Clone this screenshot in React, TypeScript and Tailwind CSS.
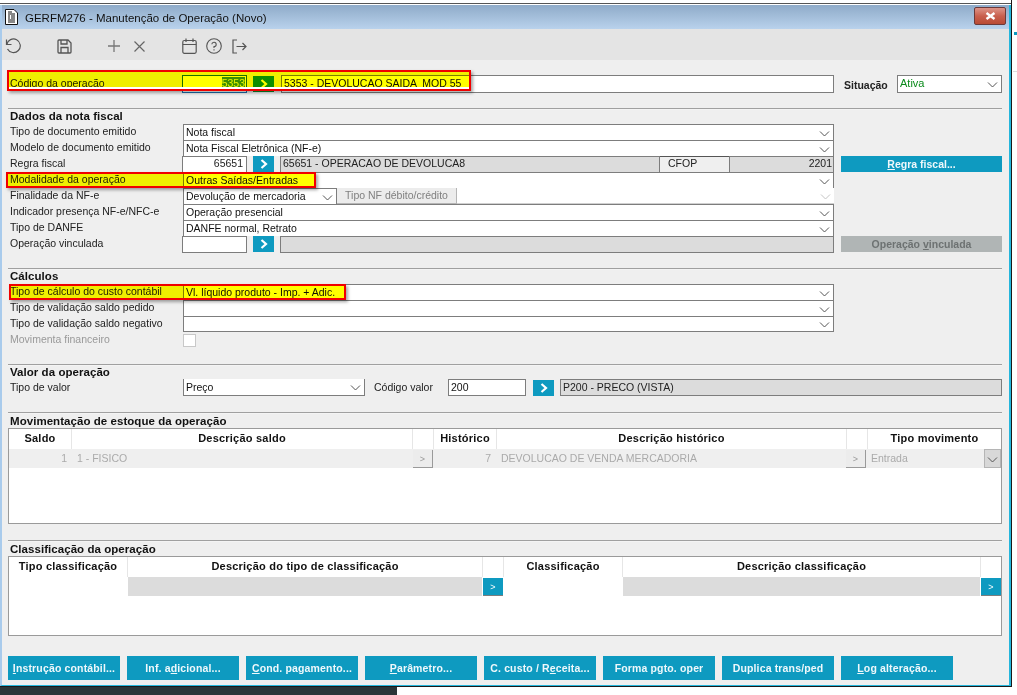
import React from "react";

const FONT = "font-['Liberation_Sans',Arial,sans-serif]";

function Chevron({ className = "text-[#555]" }: { className?: string }) {
  return (
    <svg width="11" height="6" viewBox="0 0 11 6" className={`mt-[2px] shrink-0 ${className}`} fill="none" stroke="currentColor" strokeWidth="1">
      <path d="M1 0.5 L5.5 5 L10 0.5" />
    </svg>
  );
}

function Arrow() {
  return (
    <svg width="8" height="10" viewBox="0 0 8 10" fill="none" stroke="white" strokeWidth="2.2">
      <path d="M1.5 1 L6 5 L1.5 9" />
    </svg>
  );
}

function GoBtn({ green = false }: { green?: boolean }) {
  return (
    <div className={`w-[21px] h-[16px] shrink-0 flex items-center justify-center ${green ? "bg-[#0d8f2b]" : "bg-[#0e9ac0]"}`}>
      <Arrow />
    </div>
  );
}

function Select({ text, className = "", color = "text-[#111]" }: { text?: string; className?: string; color?: string }) {
  return (
    <div className={`h-[16px] bg-white border-l-[1px] border-t-[1px] border-[#7d7d7d] flex items-center justify-between pl-[2px] pr-[3px] ${className}`}>
      <span className={`whitespace-nowrap pb-[2px] ${color}`}>{text}</span>
      <Chevron />
    </div>
  );
}

function Row({ label, children, muted = false }: { label: string; children: React.ReactNode; muted?: boolean }) {
  return (
    <div className="flex h-[16px] items-center">
      <span className={`w-[175px] pl-[2px] pb-[2px] shrink-0 whitespace-nowrap ${muted ? "text-[#999]" : "text-[#222]"}`}>{label}</span>
      {children}
    </div>
  );
}

function Divider() {
  return <div className="h-[2px] border-t-[1px] border-[#a0a0a0] bg-[#f4f4f4]" />;
}

function Title({ children }: { children: React.ReactNode }) {
  return <div className="font-bold text-[11.5px] text-[#111] leading-[14px] pl-[2px] tracking-[0.05px]">{children}</div>;
}

function TableHead({ label, w }: { label?: string; w?: string }) {
  return (
    <div className={`h-[20px] shrink-0 flex items-center justify-center font-bold text-[11px] tracking-[0.22px] pb-[3px] text-[#111] border-r-[1px] border-[#e6e6e6] ${w ?? ""}`}>
      {label}
    </div>
  );
}

function MiniBtn({ active = false }: { active?: boolean }) {
  return (
    <div className={`w-[20px] h-[18px] mt-[1px] shrink-0 flex items-center justify-center text-[9px] ${active ? "bg-[#0e9ac0] text-white border-b-[1px] border-[#7d7d7d]" : "bg-[#ececec] text-[#999] border-b-[1px] border-r-[1px] border-[#9a9a9a]"}`}>
      &gt;
    </div>
  );
}

function U({ children }: { children: React.ReactNode }) {
  return <span className="underline">{children}</span>;
}

function BigBtn({ children }: { children: React.ReactNode }) {
  return (
    <div className="w-[112px] h-[24px] bg-[#0e9ac0] text-[#eef8fb] font-bold text-[10.5px] flex items-center justify-center whitespace-nowrap tracking-[0.15px]">
      <span>{children}</span>
    </div>
  );
}

function Mark({ className, strip = false }: { className: string; strip?: boolean }) {
  return (
    <div className={`absolute border-[2px] border-[#f00000] shadow-[2px_2px_3px_rgba(0,0,0,0.35)] flex flex-col ${className}`}>
      <div className="flex-1 bg-[#ffff00] mix-blend-multiply" />
      {strip && <div className="h-[2px] bg-white" />}
    </div>
  );
}

export default function App() {
  return (
    <div className={`relative w-[1017px] h-[695px] bg-white overflow-hidden text-[10.5px] leading-[14px] ${FONT}`}>
      <div className="w-[1012px] h-[687px] flex flex-col pt-[3px] border-r-[1px] border-b-[1px] border-[#1a1a1a] bg-white">
        <div className="border-t-[1px] border-[#555] h-[2px]" />
        <div className="flex-1 flex flex-col border-l-[2px] border-r-[2px] border-b-[1px] border-l-[#a9cbec] border-r-[#25b6dc] border-b-[#25b6dc] min-h-0">
          {/* title bar */}
          <div className="h-[24px] shrink-0 flex items-center bg-gradient-to-b from-[#8fabc9] to-[#b9d2ec] pl-[3px] pr-[3px]">
            <svg width="13" height="16" viewBox="0 0 13 16" className="mr-[7px] shrink-0">
              <path d="M0.5 0.5 H9 L12.5 4 V15.5 H0.5 Z" fill="white" stroke="#111" />
              <path d="M3 3h4M3 5h7M3 7h2M6 7h4M3 9h2M6 9h4M3 11h7M3 13h7" stroke="#111" />
            </svg>
            <span className="text-[11.5px] leading-[14px] pt-[2px] text-[#111] whitespace-nowrap">GERFM276 - Manutenção de Operação (Novo)</span>
            <div className="ml-auto w-[32px] h-[18px] -mt-[3px] rounded-[2px] border-[1px] border-[#6b3a3a] bg-gradient-to-b from-[#dd9488] via-[#c9604e] to-[#b84a34] flex items-center justify-center">
              <svg width="11" height="8" viewBox="0 0 11 8" fill="none" stroke="white" strokeWidth="2.4">
                <path d="M1.5 1 L9.5 7 M9.5 1 L1.5 7" />
              </svg>
            </div>
          </div>
          {/* toolbar */}
          <div className="h-[31px] shrink-0 bg-[#e4e4e4] flex items-center text-[#555] pl-[3px] pt-[3px]">
            <svg width="17" height="16" viewBox="0 0 17 16" fill="none" stroke="currentColor" strokeWidth="1.2" className="shrink-0">
              <path d="M1.5 1.5 V6.5 H6.5" />
              <path d="M1.8 6.5 A6.8 6.8 0 1 1 2.5 11" />
            </svg>
            <svg width="15" height="15" viewBox="0 0 15 15" fill="none" stroke="currentColor" strokeWidth="1.3" className="ml-[35px] shrink-0">
              <path d="M1 2 a1 1 0 0 1 1-1 H11 L14 4 V13 a1 1 0 0 1-1 1 H2 a1 1 0 0 1-1-1 Z" />
              <path d="M4 1 V5 H10 V1 M4 14 V8.5 H11 V14" />
            </svg>
            <svg width="12" height="12" viewBox="0 0 12 12" fill="none" stroke="#777" strokeWidth="1.3" className="ml-[36px] shrink-0">
              <path d="M6 0 V12 M0 6 H12" />
            </svg>
            <svg width="11" height="11" viewBox="0 0 11 11" fill="none" stroke="#666" strokeWidth="1.2" className="ml-[14px] shrink-0">
              <path d="M0.5 0.5 L10.5 10.5 M10.5 0.5 L0.5 10.5" />
            </svg>
            <svg width="15" height="16" viewBox="0 0 15 16" fill="none" stroke="currentColor" strokeWidth="1.2" className="ml-[37px] shrink-0">
              <rect x="0.8" y="2.5" width="13.4" height="12.8" rx="1.5" />
              <path d="M0.8 6.5 H14.2 M4 0.5 V4 M11 0.5 V4" />
            </svg>
            <svg width="16" height="16" viewBox="0 0 16 16" fill="none" stroke="currentColor" strokeWidth="1.1" className="ml-[9px] shrink-0">
              <circle cx="8" cy="8" r="7.3" />
              <path d="M5.8 6.2 A2.2 2.2 0 1 1 8 8.6 V10" />
              <path d="M8 11.3 V12.6" />
            </svg>
            <svg width="15" height="15" viewBox="0 0 15 15" fill="none" stroke="currentColor" strokeWidth="1.2" className="ml-[10px] shrink-0">
              <path d="M5 1 H1 V14 H5" />
              <path d="M4.5 7.5 H14 M10.5 4 L14 7.5 L10.5 11" />
            </svg>
          </div>
          {/* form */}
          <div className="flex-1 bg-[#efefef] pl-[6px] pr-[7px] min-h-0 flex flex-col">
            <div className="flex items-center h-[18px] mt-[15px] text-[#222]">
              <span className="w-[174px] pl-[2px] pb-[3px] shrink-0 whitespace-nowrap">Código da operação</span>
              <div className="w-[65px] h-[18px] border-[1px] border-[#1d6fae] bg-white flex items-center justify-end pr-[1px] pb-[2px] shrink-0">
                <span className="bg-[#3d8fd0] text-[#e8f4ff] leading-[13px]">5353</span>
              </div>
              <div className="ml-[6px]"><GoBtn green /></div>
              <div className="ml-[7px] flex-1 h-[18px] bg-white border-[1px] border-[#7d7d7d] flex items-center pl-[2px] pb-[3px] whitespace-pre text-[#111]">5353 - DEVOLUCAO SAIDA  MOD 55</div>
              <span className="ml-[10px] font-bold text-[#222] whitespace-nowrap w-[53px] shrink-0 pt-[2px]">Situação</span>
              <div className="w-[105px] h-[18px] bg-white border-[1px] border-[#7d7d7d] flex items-center justify-between pl-[2px] pr-[3px] shrink-0">
                <span className="text-[#0a8a1a] text-[11px] -mt-[2px]">Ativa</span>
                <Chevron />
              </div>
            </div>

            <div className="mt-[15px]"><Divider /></div>
            <div className="-mt-[1px]"><Title>Dados da nota fiscal</Title></div>
            <div className="flex flex-col mt-[1px] w-[826px]">
              <Row label="Tipo de documento emitido"><Select text="Nota fiscal" className="flex-1 border-r-[1px]" /></Row>
              <Row label="Modelo de documento emitido"><Select text="Nota Fiscal Eletrônica (NF-e)" className="flex-1 border-r-[1px]" /></Row>
              <Row label="Regra fiscal">
                <div className="h-[16px] flex items-center flex-1">
                  <div className="w-[65px] -ml-[1px] h-[17px] border-[1px] border-[#7d7d7d] bg-white text-right pr-[3px] text-[#222] leading-[13px] shrink-0">65651</div>
                  <div className="ml-[6px]"><GoBtn /></div>
                  <div className="ml-[6px] w-[380px] h-[17px] border-[1px] border-[#7d7d7d] bg-[#dcdcdc] pl-[2px] text-[#222] leading-[13px] whitespace-nowrap shrink-0">65651 - OPERACAO DE DEVOLUCA8</div>
                  <div className="w-[69px] h-[17px] border-t-[1px] border-[#555] bg-[#efefef] pl-[8px] text-[#222] leading-[13px] shrink-0">CFOP</div>
                  <div className="flex-1 h-[17px] border-[1px] border-[#7d7d7d] bg-[#dcdcdc] text-right pr-[1px] text-[#222] leading-[13px]">2201</div>
                </div>
              </Row>
              <Row label="Modalidade da operação"><Select text="Outras Saídas/Entradas" className="flex-1 border-r-[1px]" /></Row>
              <Row label="Finalidade da NF-e">
                <div className="flex flex-1 items-center">
                  <Select text="Devolução de mercadoria" className="w-[154px] shrink-0 border-r-[1px]" />
                  <div className="w-[120px] h-[16px] bg-[#ececec] border-r-[1px] border-b-[1px] border-[#b5b5b5] text-[#808080] pb-[2px] flex items-center justify-center shrink-0 whitespace-nowrap">Tipo NF débito/crédito</div>
                  <div className="flex-1 h-[16px] bg-white border-b-[1px] border-[#d0d0d0] flex items-center justify-end pr-[3px]"><Chevron className="text-[#c4c4c4]" /></div>
                </div>
              </Row>
              <Row label="Indicador presença NF-e/NFC-e"><Select text="Operação presencial" className="flex-1 border-r-[1px]" /></Row>
              <Row label="Tipo de DANFE"><Select text="DANFE normal, Retrato" className="flex-1 border-r-[1px]" /></Row>
              <Row label="Operação vinculada">
                <div className="h-[16px] flex items-center flex-1">
                  <div className="w-[65px] -ml-[1px] h-[17px] border-[1px] border-[#7d7d7d] bg-white shrink-0" />
                  <div className="ml-[6px]"><GoBtn /></div>
                  <div className="ml-[6px] flex-1 h-[17px] border-[1px] border-[#7d7d7d] bg-[#dcdcdc]" />
                </div>
              </Row>
            </div>

            <div className="mt-[16px]"><Divider /></div>
            <div className="-mt-[1px]"><Title>Cálculos</Title></div>
            <div className="flex flex-col mt-[1px] w-[826px]">
              <Row label="Tipo de cálculo do custo contábil"><Select text="Vl. líquido produto - Imp. + Adic." className="flex-1 border-r-[1px]" /></Row>
              <Row label="Tipo de validação saldo pedido"><Select className="flex-1 border-r-[1px]" /></Row>
              <Row label="Tipo de validação saldo negativo"><Select className="flex-1 border-r-[1px] border-b-[1px]" /></Row>
              <Row label="Movimenta financeiro" muted>
                <div className="w-[13px] h-[13px] bg-white border-[1px] border-[#c8c8c8] mt-[1px]" />
              </Row>
            </div>

            <div className="mt-[16px]"><Divider /></div>
            <div className="-mt-[1px]"><Title>Valor da operação</Title></div>
            <div className="flex h-[17px] items-center">
              <span className="w-[175px] pl-[2px] pb-[2px] shrink-0 text-[#222]">Tipo de valor</span>
              <div className="w-[182px] h-[17px] bg-white border-l-[1px] border-r-[1px] border-b-[1px] border-[#7d7d7d] flex items-center justify-between pl-[2px] pr-[3px] shrink-0">
                <span className="text-[#111] pb-[1px]">Preço</span>
                <Chevron />
              </div>
              <span className="ml-[9px] pb-[2px] w-[74px] shrink-0 text-[#222] whitespace-nowrap">Código valor</span>
              <div className="w-[78px] h-[17px] bg-white border-[1px] border-[#7d7d7d] pl-[2px] leading-[15px] text-[#111] shrink-0">200</div>
              <div className="ml-[7px]"><GoBtn /></div>
              <div className="ml-[6px] flex-1 h-[17px] border-[1px] border-[#7d7d7d] bg-[#dcdcdc] pl-[2px] leading-[15px] text-[#222] whitespace-nowrap">P200 - PRECO (VISTA)</div>
            </div>

            <div className="mt-[16px]"><Divider /></div>
            <Title>Movimentação de estoque da operação</Title>
            <div className="h-[96px] border-[1px] border-[#9a9a9a] bg-white shrink-0">
              <div className="flex bg-white">
                <TableHead label="Saldo" w="w-[63px]" />
                <TableHead label="Descrição saldo" w="w-[341px]" />
                <TableHead w="w-[21px]" />
                <TableHead label="Histórico" w="w-[63px]" />
                <TableHead label="Descrição histórico" w="w-[350px]" />
                <TableHead w="w-[21px]" />
                <div className="flex-1 h-[20px] flex items-center justify-center font-bold text-[11px] tracking-[0.22px] pb-[3px] text-[#111]">Tipo movimento</div>
              </div>
              <div className="flex h-[19px] bg-[#efefef] text-[#aaa] items-center">
                <span className="w-[58px] text-right shrink-0 pb-[2px]">1</span>
                <span className="ml-[10px] w-[336px] shrink-0 pb-[2px]">1 - FISICO</span>
                <MiniBtn />
                <span className="w-[58px] text-right shrink-0 pb-[2px]">7</span>
                <span className="ml-[10px] w-[345px] shrink-0 whitespace-nowrap pb-[2px]">DEVOLUCAO DE VENDA MERCADORIA</span>
                <MiniBtn />
                <span className="ml-[5px] flex-1 pb-[1px]">Entrada</span>
                <div className="w-[17px] h-[19px] bg-[#d8d8d8] border-[1px] border-[#b5b5b5] flex items-center justify-center"><Chevron /></div>
              </div>
            </div>

            <div className="mt-[16px]"><Divider /></div>
            <Title>Classificação da operação</Title>
            <div className="h-[80px] border-[1px] border-[#9a9a9a] bg-white shrink-0">
              <div className="flex">
                <TableHead label="Tipo classificação" w="w-[119px]" />
                <TableHead label="Descrição do tipo de classificação" w="w-[355px]" />
                <TableHead w="w-[21px]" />
                <TableHead label="Classificação" w="w-[119px]" />
                <TableHead label="Descrição classificação" w="w-[358px]" />
                <div className="flex-1 h-[20px]" />
              </div>
              <div className="flex h-[19px] items-center">
                <div className="w-[119px] shrink-0" />
                <div className="w-[354px] h-[19px] bg-[#dcdcdc] shrink-0" />
                <div className="w-[1px] shrink-0" />
                <MiniBtn active />
                <div className="w-[120px] shrink-0" />
                <div className="w-[357px] h-[19px] bg-[#dcdcdc] shrink-0" />
                <div className="w-[1px] shrink-0" />
                <MiniBtn active />
              </div>
            </div>

            <div className="flex gap-[7px] mt-[20px]">
              <BigBtn><U>I</U>nstrução contábil...</BigBtn>
              <BigBtn>Inf. a<U>d</U>icional...</BigBtn>
              <BigBtn><U>C</U>ond. pagamento...</BigBtn>
              <BigBtn><U>P</U>arâmetro...</BigBtn>
              <BigBtn>C. custo / R<U>e</U>ceita...</BigBtn>
              <BigBtn>Forma pgto. oper</BigBtn>
              <BigBtn>Duplica trans/ped</BigBtn>
              <BigBtn><U>L</U>og alteração...</BigBtn>
            </div>
          </div>
        </div>
      </div>
      <div className="h-[8px] w-[397px] bg-[#2b3538]" />

      {/* buttons in the right column, over the form */}
      <div className="absolute left-[841px] top-[156px] w-[161px] h-[16px] bg-[#0e9ac0] text-[#eef8fb] font-bold flex items-center justify-center"><span><U>R</U>egra fiscal...</span></div>
      <div className="absolute left-[841px] top-[236px] w-[161px] h-[16px] bg-[#b0b5b5] text-[#6d7272] font-bold flex items-center justify-center"><span>Operação <U>v</U>inculada</span></div>

      {/* review annotations */}
      <Mark strip className="left-[7px] top-[70px] w-[464px] h-[21px]" />
      <Mark className="left-[6px] top-[172px] w-[310px] h-[16px]" />
      <Mark className="left-[9px] top-[284px] w-[337px] h-[16px]" />

      <div className="absolute left-[1014px] top-[32px] w-[3px] h-[3px] bg-[#0e9ac0]" />
      <div className="absolute left-[1013px] top-[71px] w-[4px] h-[1px] bg-[#dddddd]" />
    </div>
  );
}
